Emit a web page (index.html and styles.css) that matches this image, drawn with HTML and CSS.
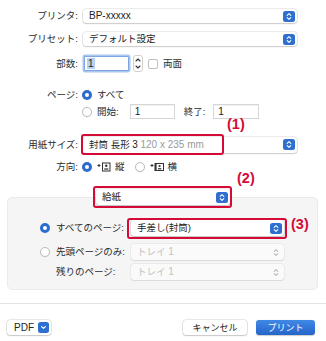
FILE: index.html
```html
<!DOCTYPE html>
<html lang="ja">
<head>
<meta charset="utf-8">
<link rel="stylesheet" href="styles.css">
</head>
<body>
<div class="dialog">
  <div class="row r1">
    <span class="lbl">プリンタ:</span>
    <div class="popup p-main"><span class="txt lat">BP-xxxxx</span><svg class="step" width="12" height="11" viewBox="0 0 12 11"><rect width="12" height="11" rx="2.5" fill="#2e6fcf"/><path d="M4.2 4.4 6 2.7 7.8 4.4M4.2 6.6 6 8.3 7.8 6.6" fill="none" stroke="#fff" stroke-width="1.1" stroke-linecap="round" stroke-linejoin="round"/></svg></div>
  </div>
  <div class="row r2">
    <span class="lbl">プリセット:</span>
    <div class="popup p-main"><span class="txt">デフォルト設定</span><svg class="step" width="12" height="11" viewBox="0 0 12 11"><rect width="12" height="11" rx="2.5" fill="#2e6fcf"/><path d="M4.2 4.4 6 2.7 7.8 4.4M4.2 6.6 6 8.3 7.8 6.6" fill="none" stroke="#fff" stroke-width="1.1" stroke-linecap="round" stroke-linejoin="round"/></svg></div>
  </div>
  <div class="row r3">
    <span class="lbl">部数:</span>
    <div class="ctl">
      <div class="field copies focus"><span class="sel lat">1</span></div>
      <svg class="spin" width="10" height="17" viewBox="0 0 10 17"><rect x="0.5" y="0.5" width="9" height="16" rx="2.5" fill="#fff" stroke="#d0d0d0"/><path d="M3 6 5 4 7 6M3 11 5 13 7 11" fill="none" stroke="#333" stroke-width="1.1" stroke-linecap="round" stroke-linejoin="round"/></svg>
      <span class="check"></span>
      <span class="ctext">両面</span>
    </div>
  </div>
  <div class="row r4">
    <span class="lbl">ページ:</span>
    <div class="ctl"><span class="radio on"></span><span class="rtext">すべて</span></div>
  </div>
  <div class="row r5">
    <span class="lbl"></span>
    <div class="ctl">
      <span class="radio"></span><span class="rtext">開始:</span>
      <div class="field f-from lat">1</div>
      <span class="rtext t-end">終了:</span>
      <div class="field f-to lat">1</div>
    </div>
  </div>
  <div class="row r6">
    <span class="lbl">用紙サイズ:</span>
    <div class="popup p-paper"><span class="txt">封筒 長形 <span class="lat">3</span> <span class="dim lat">120 x 235 mm</span></span><svg class="step" width="12" height="11" viewBox="0 0 12 11"><rect width="12" height="11" rx="2.5" fill="#2e6fcf"/><path d="M4.2 4.4 6 2.7 7.8 4.4M4.2 6.6 6 8.3 7.8 6.6" fill="none" stroke="#fff" stroke-width="1.1" stroke-linecap="round" stroke-linejoin="round"/></svg></div>
    <span class="redbox rb1"></span>
    <span class="note n1">(1)</span>
  </div>
  <div class="row r7">
    <span class="lbl">方向:</span>
    <div class="ctl">
      <span class="radio on"></span>
      <svg class="orient" width="14" height="10" viewBox="0 0 14 10"><path d="M0.5 3.5H3.5M2 2V5" stroke="#333" stroke-width="1"/><rect x="5.5" y="1" width="7.5" height="8" fill="none" stroke="#333" stroke-width="1"/><circle cx="9.25" cy="3.8" r="1.2" fill="#333"/><path d="M7.2 7H11.3" stroke="#333" stroke-width="1.2"/></svg>
      <span class="otext">縦</span>
      <span class="radio r-land"></span>
      <svg class="orient" width="14" height="10" viewBox="0 0 14 10"><path d="M0.5 3.5H3.5M2 2V5" stroke="#333" stroke-width="1"/><rect x="5" y="1.5" width="8.5" height="7" fill="none" stroke="#333" stroke-width="1"/><rect x="5" y="1.5" width="1.6" height="7" fill="#333"/><circle cx="9.6" cy="4" r="1.1" fill="#333"/><path d="M8 6.8H11.3" stroke="#333" stroke-width="1.2"/></svg>
      <span class="otext">横</span>
    </div>
  </div>
  <div class="feed">
    <div class="popup p-feed"><span class="txt">給紙</span><svg class="step" width="12" height="11" viewBox="0 0 12 11"><rect width="12" height="11" rx="2.5" fill="#2e6fcf"/><path d="M4.2 4.4 6 2.7 7.8 4.4M4.2 6.6 6 8.3 7.8 6.6" fill="none" stroke="#fff" stroke-width="1.1" stroke-linecap="round" stroke-linejoin="round"/></svg>
      <span class="redbox rb2"></span>
      <span class="note n2">(2)</span>
    </div>
  </div>
  <div class="panel">
    <div class="prow pa">
      <span class="radio on"></span><span class="plbl">すべてのページ:</span>
      <div class="popup p-tray"><span class="txt">手差し(封筒)</span><svg class="step" width="12" height="11" viewBox="0 0 12 11"><rect width="12" height="11" rx="2.5" fill="#2e6fcf"/><path d="M4.2 4.4 6 2.7 7.8 4.4M4.2 6.6 6 8.3 7.8 6.6" fill="none" stroke="#fff" stroke-width="1.1" stroke-linecap="round" stroke-linejoin="round"/></svg>
        <span class="redbox rb3"></span>
        <span class="note n3">(3)</span>
      </div>
    </div>
    <div class="prow pb">
      <span class="radio"></span><span class="plbl">先頭ページのみ:</span>
      <div class="popup p-tray dis"><span class="txt">トレイ <span class="lat">1</span></span><svg class="step" width="12" height="11" viewBox="0 0 12 11"><path d="M4.2 4.4 6 2.7 7.8 4.4M4.2 6.6 6 8.3 7.8 6.6" fill="none" stroke="#b8b8b8" stroke-width="1.1" stroke-linecap="round" stroke-linejoin="round"/></svg></div>
    </div>
    <div class="prow pc">
      <span class="plbl indent">残りのページ:</span>
      <div class="popup p-tray dis"><span class="txt">トレイ <span class="lat">1</span></span><svg class="step" width="12" height="11" viewBox="0 0 12 11"><path d="M4.2 4.4 6 2.7 7.8 4.4M4.2 6.6 6 8.3 7.8 6.6" fill="none" stroke="#b8b8b8" stroke-width="1.1" stroke-linecap="round" stroke-linejoin="round"/></svg></div>
    </div>
  </div>
  <div class="sep"></div>
  <div class="bar">
    <div class="btn pdf"><span class="lat">PDF</span><svg width="11" height="11" viewBox="0 0 11 11"><rect width="11" height="11" rx="2.5" fill="#2e6fcf"/><path d="M3.6 4.6 5.5 6.4 7.4 4.6" fill="none" stroke="#fff" stroke-width="1.2" stroke-linecap="round" stroke-linejoin="round"/></svg></div>
    <div class="spacer"></div>
    <div class="btn cancel">キャンセル</div>
    <div class="btn print">プリント</div>
  </div>
</div>
</body>
</html>
```

FILE: styles.css
```css
* { box-sizing: border-box; margin: 0; padding: 0; }
html, body { width: 326px; height: 341px; overflow: hidden; }
body {
  background: #fff;
  font-family: "Liberation Sans", "Noto Sans CJK JP", sans-serif;
  font-size: 9.5px;
  line-height: 12px;
  color: #2b2b2b;
}
.lat { font-size: 10px; }
.dialog { display: flex; flex-direction: column; padding-top: 9px; }

.row {
  display: grid;
  grid-template-columns: 78px 1fr;
  column-gap: 4px;
  align-items: center;
  position: relative;
}
.lbl { text-align: right; white-space: nowrap; }
.ctl { display: flex; align-items: center; }

.r1 { height: 14px; }
.r2 { height: 14px; margin-top: 9px; }
.r3 { height: 17px; margin-top: 9px; }
.r4 { height: 13px; margin-top: 16px; }
.r5 { height: 15px; margin-top: 3px; }
.r6 { height: 17px; margin-top: 17px; }
.r7 { height: 12px; margin-top: 8px; }

/* popups */
.popup {
  position: relative;
  display: flex;
  align-items: center;
  background: #fff;
  border-radius: 3px;
  box-shadow: 0 0 0 0.5px rgba(0,0,0,0.16), 0 1px 1.5px rgba(0,0,0,0.14);
  padding-left: 6px;
  padding-right: 2px;
  color: #222;
  white-space: nowrap;
}
.popup .txt { flex: 1; }
.popup .step { flex: none; }
.p-main { width: 214px; height: 14px; margin-left: 1px; }
.p-paper { width: 215px; height: 16px; padding-left: 7px; padding-right: 2px; }
.dim { color: #9a9a9a; }

.p-feed { width: 134px; height: 16px; padding-left: 6px; }
.p-tray { width: 153px; height: 16px; padding-left: 6px; }
.dis { background: #fafafa; color: #c2c2c2; box-shadow: 0 0 0 0.5px rgba(0,0,0,0.09), 0 1px 1px rgba(0,0,0,0.07); }

/* fields */
.field {
  height: 15px;
  background: #fff;
  border: 1px solid #d6d6d6;
  box-shadow: inset 0 0.5px 0 #e8e8e8;
  padding-left: 4px;
  display: flex;
  align-items: center;
  color: #222;
}
.copies { width: 45px; margin-left: 2px; padding-left: 2px; }
.focus { border-color: #7da6e3; box-shadow: 0 0 0 1.5px #a9c6ef; border-radius: 1px; }
.sel { background: #b5d2f6; padding: 0 1px; line-height: 11px; }
.spin { margin-left: 4px; }
.check {
  width: 10px; height: 10px; margin-left: 5px;
  border: 1px solid #bdbdbd; border-radius: 2px; background: #fff;
}
.ctext { margin-left: 5px; }

.radio {
  flex: none;
  width: 10px; height: 10px; border-radius: 50%;
  background: #fff; border: 1px solid #bcbcbc;
  box-shadow: 0 0.5px 1px rgba(0,0,0,0.08);
}
.radio.on { border: 3px solid #2c6ed0; background: #fff; }
.rtext { margin-left: 5px; white-space: nowrap; }
.f-from { width: 45px; margin-left: 11px; }
.t-end { margin-left: 9px; }
.f-to { width: 46px; margin-left: 8px; }

.orient { margin-left: 5px; }
.otext { margin-left: 4px; }
.r-land { margin-left: 10px; }

/* annotations */
.redbox {
  position: absolute;
  border: 2px solid #d30b36;
  border-radius: 3px;
  pointer-events: none;
}
.rb1 { left: 81px; top: -2px; width: 143px; height: 21px; }
.rb2 { left: -3px; top: -3px; width: 139px; height: 22px; }
.rb3 { left: -4px; top: -2px; width: 160px; height: 21px; }
.note {
  position: absolute;
  font-family: "Liberation Sans", sans-serif;
  font-weight: bold;
  font-size: 14.5px;
  line-height: 14px;
  color: #d30b36;
}
.n1 { left: 227px; top: -19px; }
.n2 { left: 141px; top: -18px; }
.n3 { left: 160px; top: -3px; }

/* feed source */
.feed { margin-top: 16px; padding-left: 96px; position: relative; z-index: 1; }

.panel {
  margin-top: -8px;
  margin-left: 7px;
  width: 311px;
  height: 93px;
  background: #f5f5f5;
  border: 1px solid #ebebeb;
  border-radius: 5px;
  padding-top: 22px;
  padding-left: 32px;
  display: flex;
  flex-direction: column;
}
.prow { display: flex; align-items: center; position: relative; }
.pa { height: 16px; }
.pb { height: 16px; margin-top: 8px; }
.pc { height: 16px; margin-top: 4px; }
.plbl { width: 81px; padding-left: 6px; white-space: nowrap; }
.plbl.indent { width: 91px; padding-left: 16px; }

.sep { margin-top: 13px; height: 1px; background: #e4e4e4; }

.bar { display: flex; align-items: center; margin-top: 16px; padding: 0 11px 0 7px; height: 15px; }
.btn {
  height: 15px;
  border-radius: 3px;
  display: flex;
  align-items: center;
  justify-content: center;
  font-size: 9px;
  background: #fff;
  box-shadow: 0 0 0 0.5px rgba(0,0,0,0.18), 0 1px 1.5px rgba(0,0,0,0.14);
  color: #222;
}
.pdf { width: 44px; justify-content: space-between; padding-left: 7px; padding-right: 2px; }
.spacer { flex: 1; }
.cancel { width: 64px; }
.print {
  width: 59px; margin-left: 9px;
  background: linear-gradient(#4088e6, #2565c9);
  color: #fff;
  box-shadow: 0 0.5px 1px rgba(0,0,0,0.2);
}
```
